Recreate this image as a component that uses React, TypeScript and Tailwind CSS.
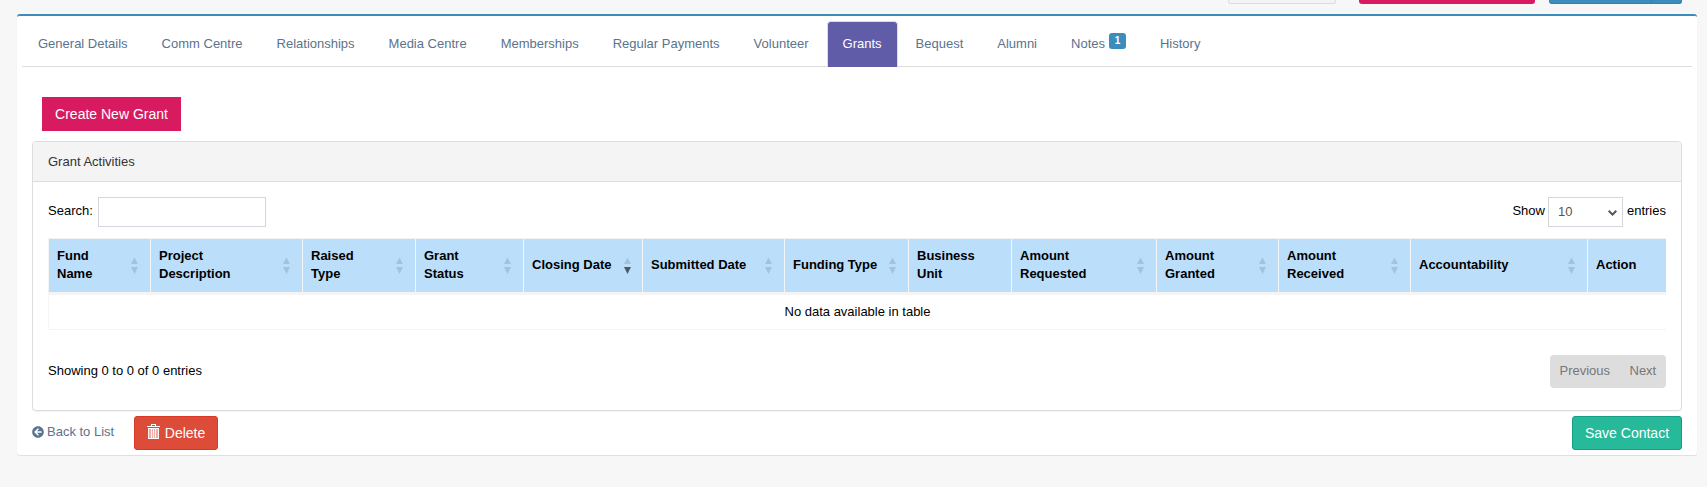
import { useState } from 'react';
import { FaArrowCircleLeft } from 'react-icons/fa';
import clsx from 'clsx';

type Column = {
  label: string;
  width: string;
  sort?: 'none' | 'desc';
};

const TABS = [
  { name: 'General Details' },
  { name: 'Comm Centre' },
  { name: 'Relationships' },
  { name: 'Media Centre' },
  { name: 'Memberships' },
  { name: 'Regular Payments' },
  { name: 'Volunteer' },
  { name: 'Grants' },
  { name: 'Bequest' },
  { name: 'Alumni' },
  { name: 'Notes', count: 1 },
  { name: 'History' },
];

const COLUMNS: Column[] = [
  { label: 'Fund Name', width: 'w-[102px]', sort: 'none' },
  { label: 'Project Description', width: 'w-[152px]', sort: 'none' },
  { label: 'Raised Type', width: 'w-[113px]', sort: 'none' },
  { label: 'Grant Status', width: 'w-[108px]', sort: 'none' },
  { label: 'Closing Date', width: 'w-[119px]', sort: 'desc' },
  { label: 'Submitted Date', width: 'w-[142px]', sort: 'none' },
  { label: 'Funding Type', width: 'w-[124px]', sort: 'none' },
  { label: 'Business Unit', width: 'w-[103px]' },
  { label: 'Amount Requested', width: 'w-[145px]', sort: 'none' },
  { label: 'Amount Granted', width: 'w-[122px]', sort: 'none' },
  { label: 'Amount Received', width: 'w-[132px]', sort: 'none' },
  { label: 'Accountability', width: 'w-[177px]', sort: 'none' },
  { label: 'Action', width: 'w-[79px]' },
];

function SortArrows({ active }: { active: boolean }) {
  return (
    <svg width="7" height="17" viewBox="0 0 7 17" className="shrink-0">
      <path d="M3.5 .5L7 7H0z" fill="#a4c2dc" />
      <path d="M3.5 17L0 10h7z" fill={active ? '#4b5964' : '#a4c2dc'} />
    </svg>
  );
}

function TrashIcon() {
  return (
    <svg width="13" height="15" viewBox="0 0 13 15" fill="#fff" className="-mt-[3px]">
      <path d="M4 0h5v2h4v1H0V2h4zM5 1v1h3V1z" fillRule="evenodd" />
      <path d="M1 4h11v1H1zM1 14h11v1H1z" />
      <path d="M1 5h11v9H1z" fillOpacity=".55" />
      <path d="M1 5h1v9H1zM4 5h1v9H4zM6 5h1v9H6zM8 5h1v9H8zM11 5h1v9h-1z" fillOpacity=".85" />
    </svg>
  );
}

export default function App() {
  const [activeTab, setActiveTab] = useState('Grants');
  const [search, setSearch] = useState('');

  return (
    <div className="h-[487px] overflow-hidden bg-[#f7f7f7] pl-[17px] pr-2.5 font-['Liberation_Sans',Arial,sans-serif] text-[13px] leading-[18.57px] text-black">
      {/* Lower edge of the page toolbar */}
      <div className="flex h-3.5 items-start justify-end pr-[15px]">
        <div className="mr-[23px] h-1 w-[108px] rounded-b-[3px] border border-t-0 border-[#ddd] bg-[#f4f4f4]" />
        <div className="mr-3.5 h-1 w-[176px] rounded-b-[3px] bg-[#d81b60]" />
        <div className="h-1 w-[103px] rounded-bl-[3px] border border-t-0 border-[#367fa9] bg-[#3c8dbc]" />
        <div className="h-1 w-[30px] rounded-br-[3px] border border-l-0 border-t-0 border-[#367fa9] bg-[#3c8dbc]" />
      </div>

      <div className="h-[441px] rounded-[3px] border-t-2 border-[#3c8dbc] bg-white px-[5px] pt-[5px] shadow-[0_1px_1px_rgba(0,0,0,0.1)]">
        {/* Tabs */}
        <ul className="flex h-[46px] border-b border-[#ddd]">
          {TABS.map(tab => (
            <li key={tab.name} className="mr-0.5">
              <button
                onClick={() => setActiveTab(tab.name)}
                className={clsx(
                  'flex h-[46px] cursor-pointer rounded-t border border-b-0 px-[15px] pt-[13px]',
                  tab.name === activeTab
                    ? 'border-[#ddd] bg-[#605ca8] text-white'
                    : 'border-transparent text-[#5a738e]'
                )}
              >
                {tab.name}
                {tab.count && (
                  <span className="ml-1 -mt-0.5 h-4 w-[17px] rounded-[3px] bg-[#3c8dbc] text-center text-[10px] font-bold leading-4 text-white">
                    {tab.count}
                  </span>
                )}
              </button>
            </li>
          ))}
        </ul>

        <div className="px-2.5 pt-[30px]">
          <button className="ml-2.5 block h-[34px] w-[139px] cursor-pointer bg-[#d81b60] text-sm text-white">
            Create New Grant
          </button>

          {/* Grants panel */}
          <div className="mt-2.5 h-[270px] rounded border border-[#ddd] bg-white shadow-[0_1px_1px_rgba(0,0,0,0.05)]">
            <div className="h-10 rounded-t-[3px] border-b border-[#ddd] bg-[#f4f4f4] px-[15px] pt-[11px] text-[#333]">
              Grant Activities
            </div>

            <div className="px-[15px] pt-[15px]">
              <div className="flex h-[30px] justify-between">
                <label className="flex">
                  <span className="pt-[5px]">Search:</span>
                  <input
                    value={search}
                    onChange={e => setSearch(e.target.value)}
                    className="ml-[5px] h-[30px] w-[168px] border border-[#d2d6de] bg-white px-2 outline-none"
                  />
                </label>
                <div className="flex">
                  <span className="pt-[5px]">Show</span>
                  <div className="ml-[3px] mr-1 flex h-[30px] w-[75px] items-center justify-between border border-[#d2d6de] pl-[9px] pr-[5px] text-[#555]">
                    <span>10</span>
                    <svg width="9" height="6" viewBox="0 0 9 6" fill="none" stroke="#555" strokeWidth="2" className="mt-0.5">
                      <path d="M.7.8L4.5 4.6 8.3.8" />
                    </svg>
                  </div>
                  <span className="pt-[5px]">entries</span>
                </div>
              </div>

              <table className="mt-[11px] w-[1618px] table-fixed border-separate border-spacing-0">
                <thead>
                  <tr className="h-[57px] bg-[#bbdefb]">
                    {COLUMNS.map(col => (
                      <th
                        key={col.label}
                        className={clsx(
                          'border-b-[3px] border-l border-t border-[#f4f4f4] p-0 pl-2 text-left font-bold leading-[18px]',
                          col.sort === 'desc' ? 'pr-[11px]' : 'pr-3',
                          col.width
                        )}
                      >
                        <div className="flex items-center justify-between">
                          <span className={clsx('pb-0.5', !col.label.match(/Date|Funding/) && 'w-min')}>
                            {col.label}
                          </span>
                          {col.sort && <SortArrows active={col.sort === 'desc'} />}
                        </div>
                      </th>
                    ))}
                  </tr>
                </thead>
                <tbody>
                  <tr className="h-[35px]">
                    <td colSpan={COLUMNS.length} className="border-b border-l border-[#f4f4f4] p-0 text-center">
                      No data available in table
                    </td>
                  </tr>
                </tbody>
              </table>

              <div className="mt-[25px] flex justify-between">
                <span className="pt-[7px]">Showing 0 to 0 of 0 entries</span>
                <div className="flex h-[33px] rounded bg-[#ddd] pt-[7px] text-[#777]">
                  <button className="flex w-[69px] pl-[9.5px]">Previous</button>
                  <button className="flex w-[47px] pl-[10.5px]">Next</button>
                </div>
              </div>
            </div>
          </div>

          {/* Footer actions */}
          <div className="mt-[5px] flex h-[34px]">
            <a href="#" className="flex w-[102px] pt-[7px] text-[#5a738e]">
              <FaArrowCircleLeft size={12} className="mr-[3px] mt-[2.5px] shrink-0" />
              Back to List
            </a>
            <button className="flex w-[84px] cursor-pointer items-center justify-center gap-[5px] rounded-[3px] border border-[#d73925] bg-[#dd4b39] text-sm text-white">
              <TrashIcon />
              Delete
            </button>
            <button className="ml-auto w-[110px] cursor-pointer rounded-[3px] border border-[#169f85] bg-[#26b99a] text-sm text-white">
              Save Contact
            </button>
          </div>
        </div>
      </div>
    </div>
  );
}
